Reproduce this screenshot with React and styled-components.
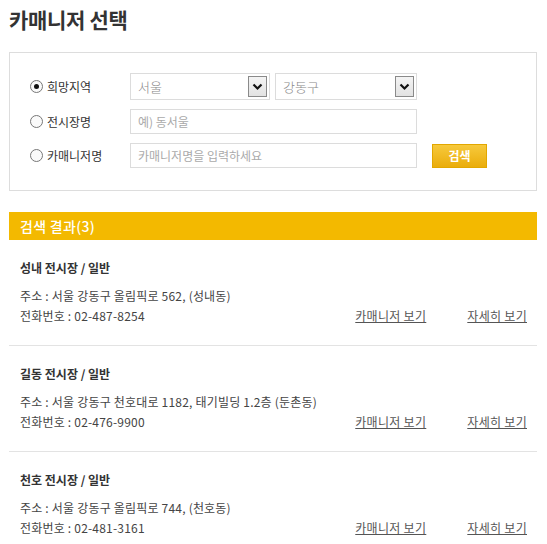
import React from 'react'
import styled, { createGlobalStyle } from 'styled-components'

const GlobalStyle = createGlobalStyle`
  body {
    margin: 0;
    background: #ffffff;
    font-family: 'Noto Sans CJK KR', 'Noto Sans', sans-serif;
    color: #333333;
  }
`

const Page = styled.div`
  width: 547px;
  padding: 4px 10px 0 9px;
  box-sizing: border-box;
`

const Title = styled.h1`
  margin: 0 0 18px;
  font-size: 21px;
  line-height: 30px;
  font-weight: 700;
  color: #333333;
  letter-spacing: -0.3px;
`

const SearchBox = styled.div`
  border: 1px solid #dddddd;
  padding: 20px 20px 22px;
  display: flex;
  flex-direction: column;
  gap: 9px;
`

const Row = styled.div`
  display: flex;
  align-items: center;
  height: ${(p) => p.$h || 25}px;
`

const RadioLabel = styled.label`
  width: 100px;
  display: flex;
  align-items: center;
  gap: 4px;
  font-size: 12px;
  color: #333333;
`

const Radio = styled.span`
  width: 11px;
  height: 11px;
  border-radius: 50%;
  border: 1px solid #777777;
  background: #fafafa;
  display: flex;
  align-items: center;
  justify-content: center;
  &::after {
    content: '';
    width: 5px;
    height: 5px;
    border-radius: 50%;
    background: ${(p) => (p.$checked ? '#111111' : 'transparent')};
  }
`

const Select = styled.div`
  width: ${(p) => p.$w}px;
  height: 27px;
  box-sizing: border-box;
  border: 1px solid #dcdcdc;
  display: flex;
  align-items: center;
  justify-content: space-between;
  padding: 0 2px 0 7px;
  font-size: 13px;
  font-weight: 300;
  color: #888888;
  & + & {
    margin-left: 5px;
  }
`

const Arrow = styled.span`
  width: 19px;
  height: 21px;
  box-sizing: border-box;
  border: 1px solid #8a8a8a;
  background: linear-gradient(#f4f4f4, #e2e2e2);
  display: flex;
  align-items: center;
  justify-content: center;
`

const Input = styled.div`
  width: 287px;
  height: 25px;
  box-sizing: border-box;
  border: 1px solid #dcdcdc;
  padding: 0 7px;
  display: flex;
  align-items: center;
  font-size: 12px;
  color: #aaaaaa;
`

const SearchButton = styled.button`
  margin-left: 15px;
  width: 55px;
  height: 24px;
  border: 1px solid #e2a700;
  background: linear-gradient(#f7c93c, #eaad0c);
  color: #ffffff;
  font-family: inherit;
  font-size: 12px;
  font-weight: 700;
  padding: 0;
`

const ResultBar = styled.div`
  margin-top: 21px;
  height: 28px;
  background: #f3b900;
  color: #ffffff;
  font-size: 14px;
  font-weight: 500;
  letter-spacing: 0.3px;
  line-height: 28px;
  padding-left: 11px;
`

const Item = styled.div`
  padding: 20px 10px 19px 11px;
  border-bottom: 1px solid ${(p) => (p.$last ? 'transparent' : '#e3e3e3')};
`

const ItemTitle = styled.div`
  font-size: 12px;
  font-weight: 700;
  line-height: 16px;
  margin-bottom: 10px;
  color: #333333;
`

const InfoRow = styled.div`
  display: flex;
  align-items: center;
  justify-content: space-between;
  font-size: 12px;
  line-height: 20px;
  letter-spacing: 0.2px;
  color: #444444;
`

const Links = styled.div`
  display: flex;
  gap: 41px;
`

const Link = styled.a`
  color: #555555;
  text-decoration: underline;
  font-size: 12px;
  letter-spacing: 0.3px;
`

function Chevron() {
  return (
    <svg width="11" height="8" viewBox="0 0 11 8">
      <path d="M1.5 1.5 L5.5 5.5 L9.5 1.5" fill="none" stroke="#111" strokeWidth="2.2" />
    </svg>
  )
}

const results = [
  { name: '성내 전시장 / 일반', addr: '서울 강동구 올림픽로 562, (성내동)', tel: '02-487-8254' },
  { name: '길동 전시장 / 일반', addr: '서울 강동구 천호대로 1182, 태기빌딩 1.2층 (둔촌동)', tel: '02-476-9900' },
  { name: '천호 전시장 / 일반', addr: '서울 강동구 올림픽로 744, (천호동)', tel: '02-481-3161' },
]

export default function App() {
  return (
    <Page>
      <GlobalStyle />
      <Title>카매니저 선택</Title>
      <SearchBox>
        <Row $h={27}>
          <RadioLabel>
            <Radio $checked />
            희망지역
          </RadioLabel>
          <Select $w={140}>
            서울
            <Arrow>
              <Chevron />
            </Arrow>
          </Select>
          <Select $w={142}>
            강동구
            <Arrow>
              <Chevron />
            </Arrow>
          </Select>
        </Row>
        <Row>
          <RadioLabel>
            <Radio />
            전시장명
          </RadioLabel>
          <Input>예) 동서울</Input>
        </Row>
        <Row>
          <RadioLabel>
            <Radio />
            카매니저명
          </RadioLabel>
          <Input>카매니저명을 입력하세요</Input>
          <SearchButton>검색</SearchButton>
        </Row>
      </SearchBox>
      <ResultBar>검색 결과(3)</ResultBar>
      {results.map((r, i) => (
        <Item key={r.name} $last={i === results.length - 1}>
          <ItemTitle>{r.name}</ItemTitle>
          <InfoRow>주소 : {r.addr}</InfoRow>
          <InfoRow>
            <span>전화번호 : {r.tel}</span>
            <Links>
              <Link href="#">카매니저 보기</Link>
              <Link href="#">자세히 보기</Link>
            </Links>
          </InfoRow>
        </Item>
      ))}
    </Page>
  )
}
